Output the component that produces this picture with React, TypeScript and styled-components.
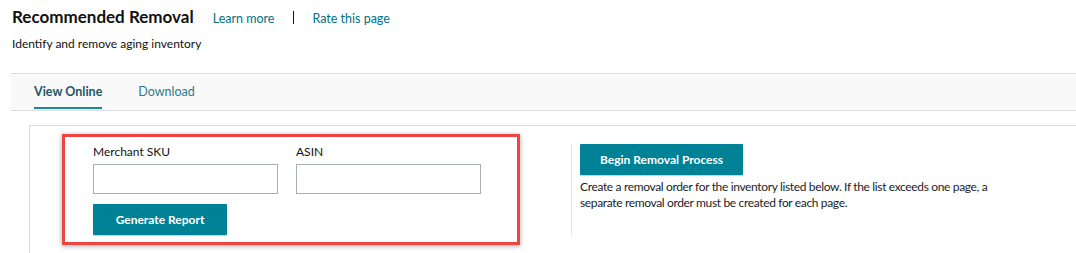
import styled, { createGlobalStyle } from 'styled-components';

const GlobalStyle = createGlobalStyle`
  body {
    margin: 0;
    background: #fff;
    font-family: Lato, "Noto Sans", Arial, sans-serif;
    color: #111;
  }
`;

const Page = styled.div`
  width: 1076px;
  height: 253px;
  overflow: hidden;
`;

const Header = styled.div`
  padding: 6px 0 0 12px;
`;

const TitleRow = styled.div`
  display: flex;
  align-items: baseline;
`;

const Title = styled.h1`
  margin: 0;
  font-size: 17px;
  line-height: 22px;
  font-weight: 700;
  color: #111;
`;

const HeaderLink = styled.a<{ $gap: number }>`
  font-size: 12.5px;
  color: #007185;
  text-decoration: none;
  margin-left: ${(p) => p.$gap}px;
`;

const Pipe = styled.span`
  width: 1px;
  height: 13px;
  background: #111;
  margin-left: 19px;
  align-self: center;
`;

const Subtitle = styled.p`
  margin: 8px 0 0;
  font-size: 12px;
  line-height: 16px;
  color: #111;
`;

const TabBar = styled.div`
  margin: 21px 0 0 11px;
  height: 36px;
  display: flex;
  align-items: stretch;
  padding-left: 23px;
  gap: 36px;
  background: #f9f9f9;
  border-top: 1px solid #dcdcdc;
  border-bottom: 1px solid #dcdcdc;
`;

const Tab = styled.div<{ $active?: boolean }>`
  display: flex;
  align-items: center;
  font-size: ${(p) => (p.$active ? 12.5 : 12.5)}px;
  font-weight: ${(p) => (p.$active ? 700 : 400)};
  color: ${(p) => (p.$active ? '#1d5666' : '#2a7a8c')};
  border-bottom: 2px solid ${(p) => (p.$active ? '#1a8a9c' : 'transparent')};
  padding-top: 2px;
  margin-bottom: 1px;
`;

const Panel = styled.div`
  margin: 14px 0 0 29px;
  height: 200px;
  border-top: 1px solid #dcdcdc;
  border-left: 1px solid #dcdcdc;
  padding: 8px 0 0 32px;
  display: flex;
  align-items: flex-start;
`;

const FilterBox = styled.div`
  box-sizing: border-box;
  width: 458px;
  height: 111px;
  border: 3px solid #ee4444;
  box-shadow: 0 1px 5px rgba(0, 0, 0, 0.35);
  padding: 7px 0 0 28px;
`;

const Fields = styled.div`
  display: flex;
  gap: 18px;
`;

const Field = styled.div`
  display: flex;
  flex-direction: column;
`;

const Label = styled.label`
  font-size: 12px;
  line-height: 16px;
  color: #111;
  margin-bottom: 4px;
`;

const Input = styled.input`
  width: 185px;
  height: 30px;
  box-sizing: border-box;
  border: 1px solid #a6b0b0;
  background: #fff;
  margin: 0;
`;

const Button = styled.button<{ $w: number }>`
  width: ${(p) => p.$w}px;
  height: 31px;
  border: none;
  border-radius: 1px;
  background: #008296;
  color: #fff;
  font-family: inherit;
  font-size: 12px;
  font-weight: 700;
  box-shadow: 0 1px 1px rgba(0, 0, 0, 0.2);
  padding: 0;
`;

const ButtonRow = styled.div`
  margin-top: 10px;
`;

const Side = styled.div`
  margin: 10px 0 0 51px;
  border-left: 1px solid #e4e4e4;
  padding-left: 8px;
  height: 91px;
`;

const Note = styled.p`
  margin: 4px 0 0;
  font-size: 12px;
  line-height: 16px;
  letter-spacing: -0.35px;
  color: #1a2329;
  width: 450px;
`;

export default function App() {
  return (
    <Page>
      <GlobalStyle />
      <Header>
        <TitleRow>
          <Title>Recommended Removal</Title>
          <HeaderLink $gap={19}>Learn more</HeaderLink>
          <Pipe />
          <HeaderLink $gap={18}>Rate this page</HeaderLink>
        </TitleRow>
        <Subtitle>Identify and remove aging inventory</Subtitle>
      </Header>
      <TabBar>
        <Tab $active>View Online</Tab>
        <Tab>Download</Tab>
      </TabBar>
      <Panel>
        <FilterBox>
          <Fields>
            <Field>
              <Label>Merchant SKU</Label>
              <Input />
            </Field>
            <Field>
              <Label>ASIN</Label>
              <Input />
            </Field>
          </Fields>
          <ButtonRow>
            <Button $w={134}>Generate Report</Button>
          </ButtonRow>
        </FilterBox>
        <Side>
          <Button $w={163}>Begin Removal Process</Button>
          <Note>
            Create a removal order for the inventory listed below. If the list exceeds one page, a
            separate removal order must be created for each page.
          </Note>
        </Side>
      </Panel>
    </Page>
  );
}
